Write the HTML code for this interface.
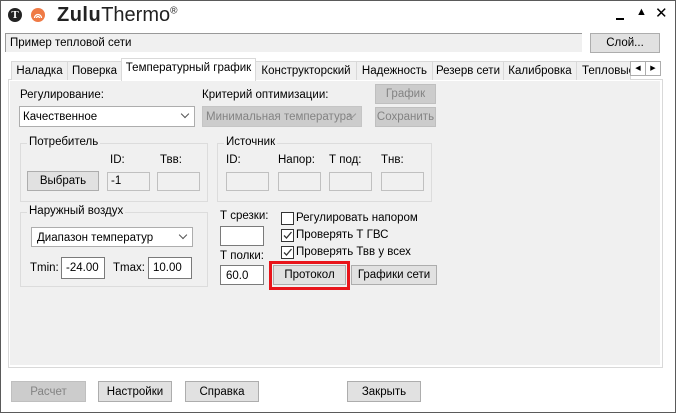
<!DOCTYPE html>
<html><head><meta charset="utf-8"><style>
*{box-sizing:border-box;margin:0;padding:0}
body{width:676px;height:413px;overflow:hidden;background:#fff;font-family:"Liberation Sans","DejaVu Sans",sans-serif;font-size:11.5px;color:#000;position:relative}
.a{position:absolute;white-space:nowrap}
.win{position:absolute;left:0;top:0;width:676px;height:413px;border:1px solid #5a5a5a}
.btn{position:absolute;background:#e1e1e1;border:1px solid #adadad;text-align:center;font-size:11.5px}
.dis{background:#cccccc;border-color:#bfbfbf;color:#838383}
.box{position:absolute;background:#fff;border:1px solid #7a7a7a}
.ebox{position:absolute;background:#f0f0f0;border:1px solid #c0c0c0}
.grp{position:absolute;border:1px solid #dcdcdc}
.gl{position:absolute;background:#f0f0f0;padding:0 2px;top:-8px;left:6px}
.cb{position:absolute;width:13px;height:13px;border:1px solid #333;background:#fff}
.tab{position:absolute;top:61px;height:19px;border:1px solid #d9d9d9;border-bottom:none;background:#f0f0f0;padding:3px 0 0 0;text-align:center}
.chev{position:absolute;right:6px;top:4px;width:6px;height:6px;border-right:1px solid #555;border-bottom:1px solid #555;transform:rotate(45deg)}
</style></head><body>
<div class="win"></div>
<div class="a" style="left:8px;top:8px;width:14px;height:14px;border-radius:50%;background:#222;color:#fff;font-weight:bold;font-size:11px;text-align:center;line-height:14px;font-family:'Liberation Serif',serif">T</div>
<div class="a" style="left:31px;top:8px;width:14px;height:14px;border-radius:50%;background:#ef7a45"></div>
<svg class="a" style="left:31px;top:8px" width="14" height="14"><path d="M3.5 10 A3.5 3.5 0 0 1 10.5 10 M5.5 10 A1.5 1.5 0 0 1 8.5 10" stroke="#fff" stroke-width="1.3" fill="none"/></svg>
<div class="a" style="left:57px;top:4px;font-size:20px;color:#222"><b style="letter-spacing:.5px">Zulu</b>Thermo<sup style="font-size:10px">®</sup></div>
<div class="a" style="left:616px;top:18px;width:8px;height:2px;background:#000"></div>
<div class="a" style="left:636px;top:6px;font-size:11px">▲</div>
<div class="a" style="left:655px;top:4px;font-size:15px;font-weight:bold">✕</div>
<div class="a" style="left:5px;top:33px;width:577px;height:19px;background:#f0f0f0;border-top:1px solid #999;border-left:1px solid #999;padding:3px 0 0 4px">Пример тепловой сети</div>
<div class="btn" style="left:590px;top:33px;width:70px;height:20px;padding-top:3px">Слой...</div>
<div class="a" style="left:8px;top:79px;width:655px;height:289px;border:1px solid #d9d9d9;background:#fff"></div>
<div class="a" style="left:10px;top:81px;width:650px;height:284px;background:#f0f0f0"></div>
<div class="tab" style="left:11px;width:57px">Наладка</div>
<div class="tab" style="left:67px;width:55px">Поверка</div>
<div class="tab" style="left:121px;top:58px;height:23px;width:135px;background:#fff;border-color:#d9d9d9">Температурный график</div>
<div class="tab" style="left:255px;width:102px">Конструкторский</div>
<div class="tab" style="left:356px;width:77px">Надежность</div>
<div class="tab" style="left:432px;width:72px">Резерв сети</div>
<div class="tab" style="left:503px;width:74px">Калибровка</div>
<div class="tab" style="left:576px;width:55px;overflow:hidden;text-align:left;padding-left:5px">Тепловые</div>
<div class="a" style="left:630px;top:61px;width:16px;height:15px;border:1px solid #adadad;background:#fff;font-size:7px;text-align:center;line-height:13px">◀</div>
<div class="a" style="left:645px;top:61px;width:16px;height:15px;border:1px solid #adadad;background:#fff;font-size:7px;text-align:center;line-height:13px">▶</div>

<div class="a" style="left:20px;top:89px">Регулирование:</div>
<div class="box" style="left:19px;top:106px;width:176px;height:21px;border-color:#adadad;padding:4px 0 0 3px">Качественное<span class="chev"></span></div>
<div class="a" style="left:202px;top:89px">Критерий оптимизации:</div>
<div class="ebox" style="left:202px;top:106px;width:160px;height:21px;background:#ccc;border-color:#c5c5c5;color:#838383;padding:4px 0 0 3px;overflow:hidden">Минимальная температура<span class="chev" style="border-color:#999"></span></div>
<div class="btn dis" style="left:375px;top:84px;width:61px;height:20px;padding-top:3px">График</div>
<div class="btn dis" style="left:375px;top:107px;width:61px;height:20px;padding-top:3px">Сохранить</div>

<div class="grp" style="left:20px;top:143px;width:188px;height:59px"><div class="gl">Потребитель</div></div>
<div class="a" style="left:110px;top:154px">ID:</div>
<div class="a" style="left:160px;top:154px">Твв:</div>
<div class="btn" style="left:27px;top:171px;width:72px;height:20px;padding-top:3px">Выбрать</div>
<div class="ebox" style="left:107px;top:172px;width:43px;height:19px;padding:2px 0 0 3px">-1</div>
<div class="ebox" style="left:157px;top:172px;width:43px;height:19px"></div>

<div class="grp" style="left:217px;top:143px;width:215px;height:59px"><div class="gl">Источник</div></div>
<div class="a" style="left:226px;top:154px">ID:</div>
<div class="a" style="left:278px;top:154px">Напор:</div>
<div class="a" style="left:329px;top:154px">Т под:</div>
<div class="a" style="left:381px;top:154px">Тнв:</div>
<div class="ebox" style="left:226px;top:172px;width:43px;height:19px"></div>
<div class="ebox" style="left:278px;top:172px;width:43px;height:19px"></div>
<div class="ebox" style="left:329px;top:172px;width:43px;height:19px"></div>
<div class="ebox" style="left:381px;top:172px;width:43px;height:19px"></div>

<div class="grp" style="left:20px;top:212px;width:188px;height:75px"><div class="gl">Наружный воздух</div></div>
<div class="box" style="left:31px;top:227px;width:162px;height:20px;border-color:#adadad;padding:4px 0 0 5px">Диапазон температур<span class="chev"></span></div>
<div class="a" style="left:30px;top:262px">Tmin:</div>
<div class="box" style="left:61px;top:257px;width:44px;height:22px;padding:4px 0 0 4px">-24.00</div>
<div class="a" style="left:113px;top:262px">Tmax:</div>
<div class="box" style="left:148px;top:257px;width:44px;height:22px;padding:4px 0 0 4px">10.00</div>

<div class="a" style="left:220px;top:210px">Т срезки:</div>
<div class="box" style="left:220px;top:226px;width:44px;height:20px"></div>
<div class="a" style="left:220px;top:250px">Т полки:</div>
<div class="box" style="left:220px;top:265px;width:44px;height:20px;padding:4px 0 0 5px">60.0</div>
<div class="cb" style="left:281px;top:212px"></div>
<div class="a" style="left:296px;top:212px">Регулировать напором</div>
<div class="cb" style="left:281px;top:229px"><svg width="11" height="11" style="position:absolute;left:0;top:0"><path d="M2 5.5 L4.5 8 L9.5 2" stroke="#333" stroke-width="1.3" fill="none"/></svg></div>
<div class="a" style="left:296px;top:229px">Проверять Т ГВС</div>
<div class="cb" style="left:281px;top:246px"><svg width="11" height="11" style="position:absolute;left:0;top:0"><path d="M2 5.5 L4.5 8 L9.5 2" stroke="#333" stroke-width="1.3" fill="none"/></svg></div>
<div class="a" style="left:296px;top:246px">Проверять Твв у всех</div>
<div class="a" style="left:269px;top:261px;width:81px;height:29px;border:3px solid #e8141a"></div>
<div class="btn" style="left:273px;top:265px;width:73px;height:20px;padding-top:3px">Протокол</div>
<div class="btn" style="left:351px;top:265px;width:86px;height:20px;padding-top:3px">Графики сети</div>

<div class="btn dis" style="left:11px;top:381px;width:75px;height:21px;padding-top:4px">Расчет</div>
<div class="btn" style="left:98px;top:381px;width:74px;height:21px;padding-top:4px">Настройки</div>
<div class="btn" style="left:185px;top:381px;width:74px;height:21px;padding-top:4px">Справка</div>
<div class="btn" style="left:347px;top:381px;width:74px;height:21px;padding-top:4px">Закрыть</div>
</body></html>
